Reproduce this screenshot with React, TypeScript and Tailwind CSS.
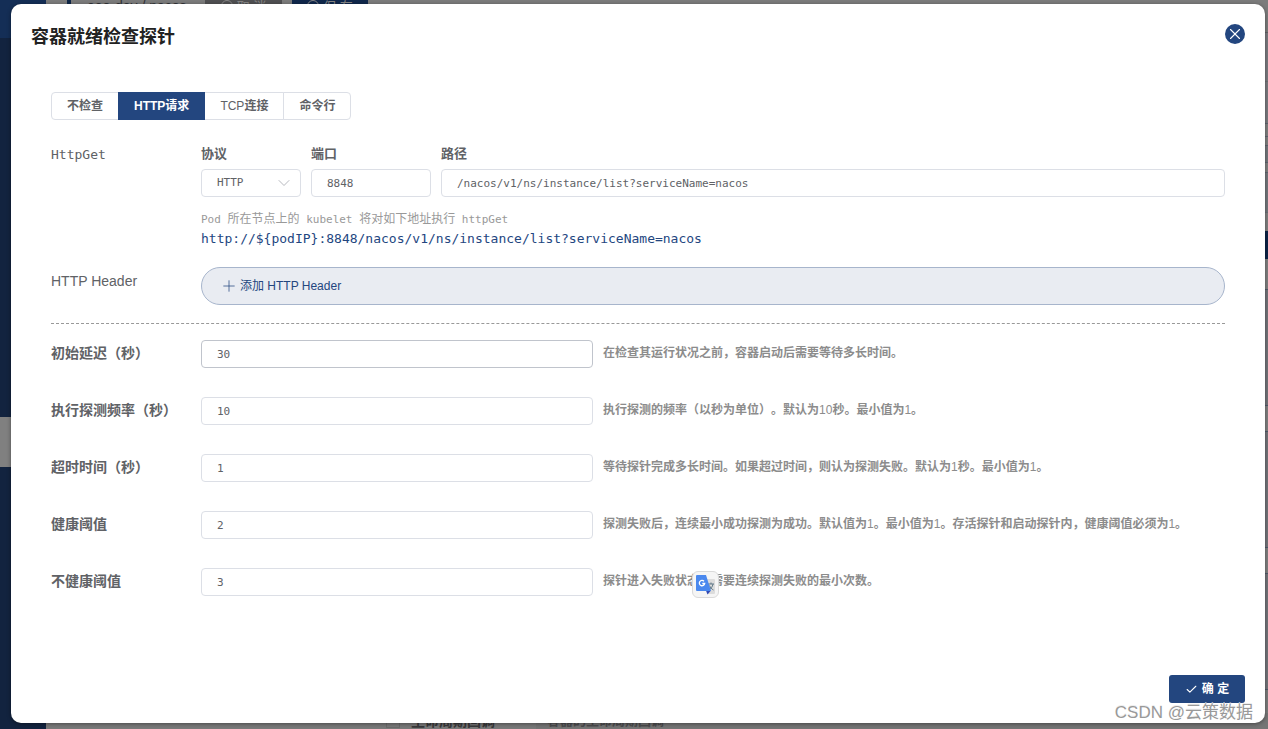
import { useState } from 'react';
import clsx from 'clsx';
import { Check, ChevronDown, Plus, X } from 'lucide-react';

const sans = "font-['Liberation_Sans','Noto_Sans_CJK_SC',sans-serif]";
const mono = "font-['DejaVu_Sans_Mono','Noto_Sans_CJK_SC',monospace]";
const inputBase =
  'h-7 w-full rounded border bg-white px-[15px] text-[11px] text-[#606266] outline-none focus:border-[#23467f]';
const columnLabel = 'block h-[25px] text-[13px] leading-5 font-bold';

const probeTypes = ['不检查', 'HTTP请求', 'TCP连接', '命令行'];

const thresholds = [
  { id: 'delay', label: '初始延迟（秒）', value: '30', hint: '在检查其运行状况之前，容器启动后需要等待多长时间。' },
  { id: 'period', label: '执行探测频率（秒）', value: '10', hint: '执行探测的频率（以秒为单位）。默认为10秒。最小值为1。' },
  { id: 'timeout', label: '超时时间（秒）', value: '1', hint: '等待探针完成多长时间。如果超过时间，则认为探测失败。默认为1秒。最小值为1。' },
  { id: 'success', label: '健康阈值', value: '2', hint: '探测失败后，连续最小成功探测为成功。默认值为1。最小值为1。存活探针和启动探针内，健康阈值必须为1。' },
  { id: 'failure', label: '不健康阈值', value: '3', hint: '探针进入失败状态时需要连续探测失败的最小次数。' },
];

// Sections of the page under the dialog, only their right edge shows
const sections = [
  'h-[49px] border-t border-[#626266] bg-[#7b7b7f]',
  'h-[42px] border-t border-[#6f6f74] bg-[#7b7b7f]',
  'h-[14px] border-y border-[#5f6570] bg-[#808080]',
  'h-[9px] border-b border-[#5f6570] bg-[#808080]',
  'h-[17px] border-b border-[#5f6570] bg-[#74777c]',
  'h-[10px] border-b border-[#5f6570] bg-[#808080]',
  'h-[40px] border-b border-[#6b6f77] bg-[#74777c]',
  'h-[18px] bg-[#808080]',
  'h-[28px] bg-[#0c2447]',
  'h-[31px] border-b border-[#4f5a6b] bg-[#808080]',
  'h-[116px] border-b border-[#4f5a6b] bg-[#737479]',
  'h-[26px] border-b border-[#4f5a6b] bg-[#808080]',
  'h-[116px] border-b border-[#4f5a6b] bg-[#737479]',
  'h-[26px] border-b border-[#4f5a6b] bg-[#808080]',
  'h-[116px] border-b border-[#4f5a6b] bg-[#737479]',
];

// Chinese runs are set bold while latin letters and digits stay regular
function Mixed({ text }: { text: string }) {
  return (
    <>
      {text.split(/([A-Za-z0-9 ]+)/).map((part, i) =>
        i % 2 ? <span key={i}>{part}</span> : <b key={i} className="font-bold">{part}</b>
      )}
    </>
  );
}

function PageBehind() {
  return (
    <div className="flex h-screen overflow-hidden bg-[#7c7c7c]" aria-hidden="true">
      <div className="flex w-[46px] shrink-0 flex-col bg-[#12233f]">
        <div className="h-[38px] bg-[#142e56]" />
        <div className="mt-[379px] h-[50px] bg-[#808080]" />
      </div>
      <div className="flex min-w-0 flex-1 flex-col">
        <div className="flex h-8 shrink-0 items-start pl-[21px] text-[#303236]">
          <span className="h-5 w-1 bg-[#0f2647]" />
          <span className="ml-4 w-[118px] text-sm leading-3">eeo-dev / nacos</span>
          <span className="flex h-5 w-[77px] items-start justify-center gap-1 bg-[#505052] text-[13px] leading-[14px] text-[#858585]">
            <span className="size-3 rounded-full border border-[#858585]" />取 消
          </span>
          <span className="ml-[10px] flex h-5 w-[76px] items-start justify-center gap-1 bg-[#10274b] text-[13px] leading-[14px] text-[#858585]">
            <span className="size-3 rounded-full border border-[#858585]" />保 存
          </span>
        </div>
        {sections.map((section, i) => (
          <div key={i} className={clsx('shrink-0', section)} />
        ))}
        <div className="mt-auto flex h-4 shrink-0 items-center bg-[#7a7a7a] text-sm font-bold leading-4 text-[#39393b]">
          <span className="ml-[340px] size-[14px] border border-[#6c6c6c]" />
          <span className="ml-[11px] w-[125px]">生命周期回调</span>
          <span className="flex-1 bg-[#757575] pl-[11px] text-[13px] text-[#4d4d4f]">容器的生命周期回调</span>
        </div>
      </div>
    </div>
  );
}

function TranslateIcon() {
  return (
    <svg width="20" height="20" viewBox="0 0 20 20" className="shrink-0">
      <path d="M7 4h11a1 1 0 0 1 1 1v13a1 1 0 0 1-1 1h-7z" fill="#dcdcdc" />
      <path d="M12 9h6M15 7.500V9M17 9c-.6 3-2 4.800-4 6M13.500 10.500c.8 2 2 3.500 4 4.500" stroke="#607988" fill="none" />
      <path d="M10 15.500h5l-3.500 4z" fill="#3049b5" />
      <path d="M1 0h9l5 16H1a1 1 0 0 1-1-1V1a1 1 0 0 1 1-1z" fill="#4a88ee" />
      <path d="M8 6.200A2.700 2.700 0 1 0 8.700 8.500H6.300" stroke="#fff" strokeWidth="1.300" fill="none" />
    </svg>
  );
}

export default function App() {
  const [active, setActive] = useState('HTTP请求');
  const [port, setPort] = useState('8848');
  const [path, setPath] = useState('/nacos/v1/ns/instance/list?serviceName=nacos');

  return (
    <div className={clsx('relative [text-spacing-trim:space-all]', sans)}>
      <PageBehind />

      <div className="absolute inset-0 flex pt-1 pr-[3px] pb-[6px] pl-[11px]">
        <div
          role="dialog"
          aria-labelledby="dialog-title"
          className="flex min-w-0 flex-1 flex-col rounded-[10px] bg-white p-5 text-[#606266] shadow-[0_1px_4px_rgba(0,0,0,0.4)]"
        >
          <header className="flex h-6 items-start justify-between">
            <h1 id="dialog-title" className="text-lg leading-[26px] font-bold text-[#222]">容器就绪检查探针</h1>
            <button type="button" aria-label="关闭" className="flex size-5 items-center justify-center rounded-full bg-[#23467f] text-white">
              <X size={18} strokeWidth={1.5} />
            </button>
          </header>

          <div className="mt-11 px-5">
            {/* Probe type */}
            <div className="flex text-xs">
              {probeTypes.map((type) => (
                <button
                  key={type}
                  type="button"
                  aria-pressed={active === type}
                  onClick={() => setActive(type)}
                  className={clsx(
                    '-ml-px h-7 border px-[15px] first:ml-0 first:rounded-l last:rounded-r',
                    active === type ? 'z-10 border-[#23467f] bg-[#23467f] font-bold text-white' : 'border-[#dcdfe6] bg-white'
                  )}
                >
                  <Mixed text={type} />
                </button>
              ))}
            </div>

            {/* HTTP request */}
            <div className="mt-6 flex">
              <div className={clsx('w-[150px] shrink-0 text-[13px] leading-[22px]', mono)}>HttpGet</div>
              <div className="min-w-0 flex-1">
                <div className="flex gap-[10px]">
                  <div className="w-[100px]">
                    <label htmlFor="scheme" className={columnLabel}>协议</label>
                    <div className="relative">
                      <select id="scheme" className={clsx(inputBase, mono, 'appearance-none border-[#dcdfe6]')}>
                        <option>HTTP</option>
                        <option>HTTPS</option>
                      </select>
                      <ChevronDown size={20} strokeWidth={1} className="pointer-events-none absolute top-1 right-[7px] text-[#a8abb2]" />
                    </div>
                  </div>
                  <div className="w-[120px]">
                    <label htmlFor="port" className={columnLabel}>端口</label>
                    <input id="port" value={port} onChange={(e) => setPort(e.target.value)} className={clsx(inputBase, mono, 'border-[#dcdfe6]')} />
                  </div>
                  <div className="flex-1">
                    <label htmlFor="path" className={columnLabel}>路径</label>
                    <input id="path" value={path} onChange={(e) => setPath(e.target.value)} className={clsx(inputBase, mono, 'border-[#dcdfe6]')} />
                  </div>
                </div>
                <p className={clsx('mt-[13px] text-[11px] leading-5 text-[#999]', mono)}>
                  Pod <span className="text-xs">所在节点上的</span> kubelet <span className="text-xs">将对如下地址执行</span> httpGet
                </p>
                <p className={clsx('text-[13px] leading-[18px] text-[#23467f]', mono)}>
                  {'http://${podIP}:'}{port}{path}
                </p>
              </div>
            </div>

            <div className="mt-[19px] flex">
              <div className="w-[150px] shrink-0 text-sm leading-7">HTTP Header</div>
              <button
                type="button"
                className="flex h-[38px] flex-1 items-center gap-0.5 rounded-full border border-[#a7b5cc] bg-[#e9ecf2] px-[18px] text-xs text-[#23467f]"
              >
                <Plus size={18} strokeWidth={1} />
                添加 HTTP Header
              </button>
            </div>

            <hr className="mt-[18px] border-0 border-t border-dashed border-[#999]" />

            {/* Timing and thresholds */}
            <div className="mt-4 flex flex-col gap-[29px]">
              {thresholds.map((item, i) => (
                <div key={item.id} className="flex h-7">
                  <label htmlFor={item.id} className="w-[150px] shrink-0 text-sm leading-[26px] font-bold">{item.label}</label>
                  <div className="w-[392px] shrink-0">
                    <input
                      id={item.id}
                      defaultValue={item.value}
                      className={clsx(inputBase, mono, i === 0 ? 'border-[#c0c4cc]' : 'border-[#dcdfe6]')}
                    />
                  </div>
                  <p className="relative ml-[10px] text-xs leading-[26px] whitespace-nowrap text-[#8c8c8c]">
                    <Mixed text={item.hint} />
                    {item.id === 'failure' && (
                      <button
                        type="button"
                        aria-label="翻译"
                        className="absolute top-[3px] left-[89px] flex size-[27px] items-center justify-center rounded-md border border-[#dadada] bg-[#f5f5f5]"
                      >
                        <TranslateIcon />
                      </button>
                    )}
                  </p>
                </div>
              ))}
            </div>
          </div>

          <footer className="mt-auto flex justify-end">
            <button type="button" className="flex h-7 w-[76px] items-center justify-center gap-1 rounded-[3px] bg-[#23467f] text-xs font-bold text-white">
              <Check size={13} strokeWidth={2} />
              确 定
            </button>
          </footer>
        </div>
      </div>

      <div className="pointer-events-none absolute right-[15px] bottom-1 text-[17px] leading-6 text-[#999] [text-shadow:1px_0_0_#fff,0_-1px_0_#eee]">
        CSDN @云策数据
      </div>
    </div>
  );
}
